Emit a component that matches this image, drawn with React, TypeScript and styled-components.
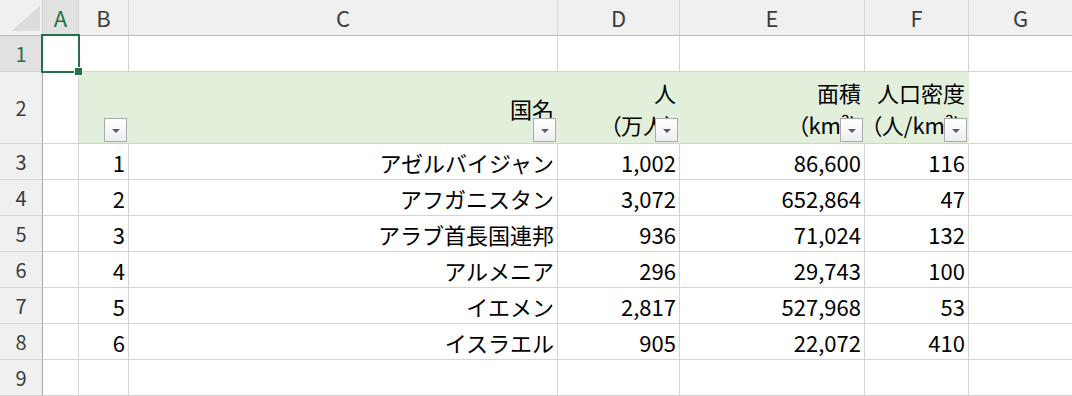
import styled, { createGlobalStyle } from "styled-components";

const GlobalStyle = createGlobalStyle`
  html, body {
    margin: 0;
    padding: 0;
    background: #ffffff;
    overflow: hidden;
  }
  body {
    font-family: "Noto Sans CJK JP", "Noto Sans", sans-serif;
  }
`;

const GREEN = "#217346";
const GRID = "#d4d4d4";
const FILL = "#e2efda";

const Sheet = styled.div`
  display: grid;
  grid-template-columns: 43px 36px 50px 429px 122px 185px 104px 104px;
  grid-template-rows: 36px 36px 72px repeat(7, 36px);
  width: 1073px;
`;

const Corner = styled.div`
  background: #f0f0f0;
  border-right: 1px solid ${GRID};
  border-bottom: 1px solid #bdbdbd;
  display: flex;
  align-items: flex-end;
  justify-content: flex-end;
  padding: 0 2px 4px 0;
  box-sizing: border-box;
`;

const ColHeader = styled.div<{ $selected?: boolean }>`
  box-sizing: border-box;
  display: flex;
  align-items: center;
  justify-content: center;
  background: ${(p) => (p.$selected ? "#e1e1e1" : "#f0f0f0")};
  color: ${(p) => (p.$selected ? GREEN : "#3c3c3c")};
  border-right: 1px solid ${GRID};
  border-bottom: 1px solid #bdbdbd;
  font-size: 22px;
  padding-bottom: 2px;
`;

const RowHeader = styled.div<{ $selected?: boolean }>`
  box-sizing: border-box;
  display: flex;
  align-items: center;
  justify-content: center;
  background: ${(p) => (p.$selected ? "#e1e1e1" : "#f0f0f0")};
  color: ${(p) => (p.$selected ? GREEN : "#3c3c3c")};
  border-right: 1px solid #a8a8a8;
  border-bottom: 1px solid ${GRID};
  font-size: 20px;
`;

const Cell = styled.div<{ $fill?: boolean }>`
  position: relative;
  box-sizing: border-box;
  display: flex;
  flex-direction: column;
  align-items: flex-end;
  justify-content: center;
  padding-right: 3px;
  background: ${(p) => (p.$fill ? FILL : "#ffffff")};
  border-right: 1px solid ${(p) => (p.$fill ? FILL : GRID)};
  border-bottom: 1px solid ${GRID};
  color: #000000;
  font-size: 22px;
  line-height: 32px;
  white-space: nowrap;
`;

const SubLine = styled.span`
  font-feature-settings: "palt";
`;

const FilterButton = styled.div`
  position: absolute;
  right: 1px;
  bottom: 1px;
  width: 23px;
  height: 24px;
  box-sizing: border-box;
  border: 1px solid #a9abad;
  background: linear-gradient(#ffffff, #eceef2);
  display: flex;
  align-items: center;
  justify-content: center;
  z-index: 2;

  &::after {
    content: "";
    width: 0;
    height: 0;
    border-left: 4px solid transparent;
    border-right: 4px solid transparent;
    border-top: 4px solid #5c5c5c;
    margin-top: 2px;
  }
`;

const SelectionBox = styled.div`
  position: absolute;
  left: -2px;
  top: -2px;
  width: 39px;
  height: 39px;
  box-sizing: border-box;
  border: 2px solid ${GREEN};
  z-index: 5;
  pointer-events: none;
`;

const FillHandle = styled.div`
  position: absolute;
  left: 32px;
  top: 32px;
  width: 7px;
  height: 7px;
  box-sizing: border-box;
  background: ${GREEN};
  outline: 1px solid #ffffff;
`;

const columns = ["A", "B", "C", "D", "E", "F", "G"];

const rows = [
  { no: 1, name: "アゼルバイジャン", pop: "1,002", area: "86,600", density: "116" },
  { no: 2, name: "アフガニスタン", pop: "3,072", area: "652,864", density: "47" },
  { no: 3, name: "アラブ首長国連邦", pop: "936", area: "71,024", density: "132" },
  { no: 4, name: "アルメニア", pop: "296", area: "29,743", density: "100" },
  { no: 5, name: "イエメン", pop: "2,817", area: "527,968", density: "53" },
  { no: 6, name: "イスラエル", pop: "905", area: "22,072", density: "410" },
];

type RowProps = {
  index: number;
  no: number;
  name: string;
  pop: string;
  area: string;
  density: string;
};

const Row = ({ index, no, name, pop, area, density }: RowProps) => (
  <>
    <RowHeader>{index}</RowHeader>
    <Cell />
    <Cell>{no}</Cell>
    <Cell>{name}</Cell>
    <Cell>{pop}</Cell>
    <Cell>{area}</Cell>
    <Cell>{density}</Cell>
    <Cell />
  </>
);

const App = () => {
  return (
    <>
      <GlobalStyle />
      <Sheet>
        <Corner>
          <svg width="28" height="26" viewBox="0 0 28 26">
            <polygon points="28,0 28,26 0,26" fill="#dcdcdc" />
          </svg>
        </Corner>
        {columns.map((c) => (
          <ColHeader key={c} $selected={c === "A"}>
            {c}
          </ColHeader>
        ))}

        <RowHeader $selected>1</RowHeader>
        <Cell>
          <SelectionBox>
            <FillHandle />
          </SelectionBox>
        </Cell>
        <Cell />
        <Cell />
        <Cell />
        <Cell />
        <Cell />
        <Cell />

        <RowHeader>2</RowHeader>
        <Cell />
        <Cell $fill>
          <FilterButton />
        </Cell>
        <Cell $fill>
          <span>国名</span>
          <FilterButton />
        </Cell>
        <Cell $fill>
          <span>人</span>
          <SubLine>（万人）</SubLine>
          <FilterButton />
        </Cell>
        <Cell $fill>
          <span>面積</span>
          <SubLine>（km²）</SubLine>
          <FilterButton />
        </Cell>
        <Cell $fill>
          <span>人口密度</span>
          <SubLine>（人/km²）</SubLine>
          <FilterButton />
        </Cell>
        <Cell />

        {rows.map((r, i) => (
          <Row key={r.no} index={i + 3} {...r} />
        ))}

        <RowHeader>9</RowHeader>
        {columns.map((c) => (
          <Cell key={`9_${c}`} />
        ))}
      </Sheet>
    </>
  );
};

export default App;
